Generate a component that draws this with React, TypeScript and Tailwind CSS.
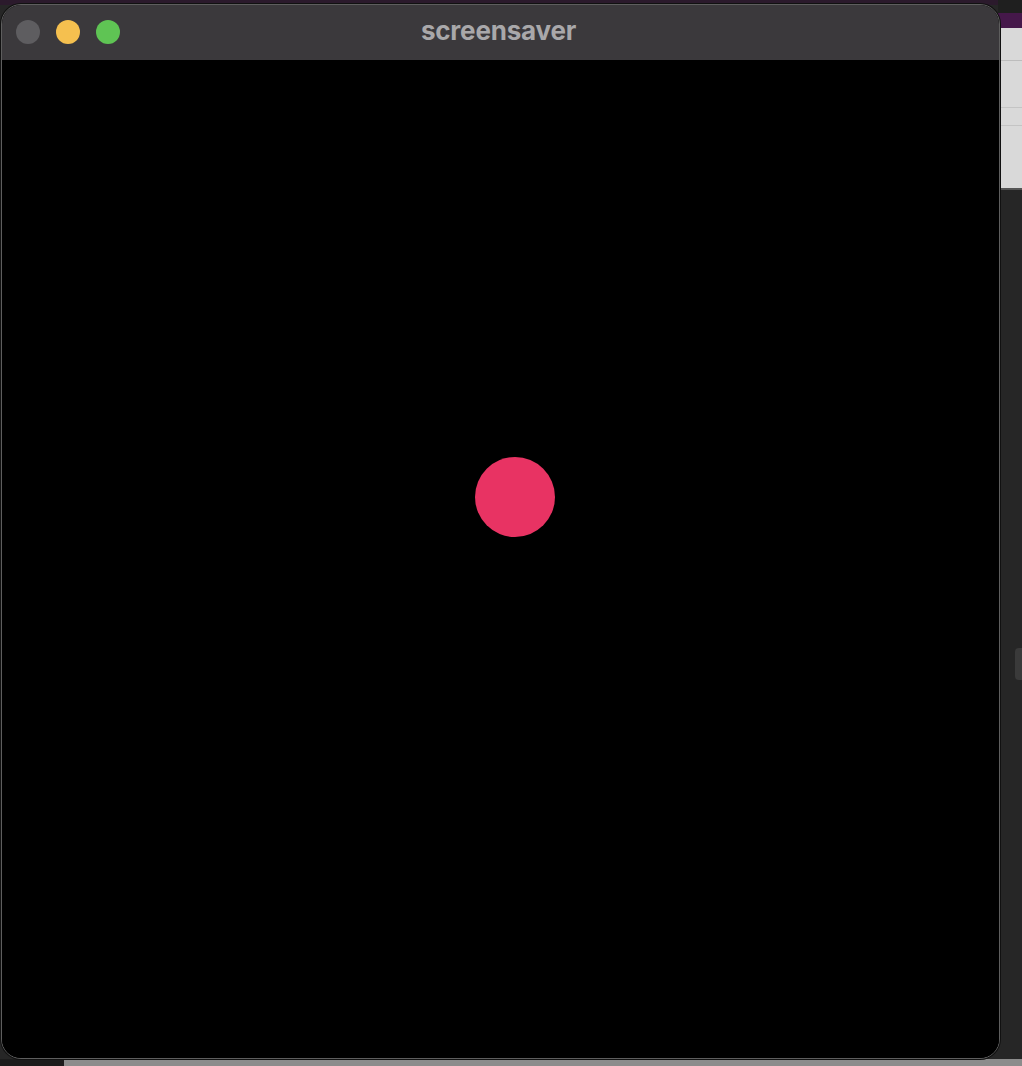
export default function App() {
  return (
    <div className="relative w-[1022px] h-[1066px] overflow-hidden bg-[#262626] font-['Inter','Liberation_Sans',sans-serif]">
      {/* desktop behind: top strip */}
      <div className="absolute left-0 top-0 w-full h-[5px] bg-[#2b1a2c]" />
      {/* other window peeking at the right */}
      <div className="absolute right-0 top-0 w-[24px] h-[1066px] flex flex-col bg-[#262626]">
        <div className="h-[13px] bg-[#1f1f1f]" />
        <div className="h-[15px] bg-[#45184a]" />
        <div className="h-[160px] flex flex-col bg-[#d9d9d9]">
          <div className="h-[32px]" />
          <div className="h-px bg-[#bdbdbd]" />
          <div className="h-[46px]" />
          <div className="h-px bg-[#c4c4c4]" />
          <div className="h-[17px]" />
          <div className="h-px bg-[#c4c4c4]" />
        </div>
        <div className="h-[2px] bg-[#555]" />
        <div className="flex-1 relative">
          <div className="absolute left-[17px] top-[458px] w-[10px] h-[32px] rounded-[4px] bg-[#3a3a3a]" />
        </div>
      </div>
      {/* bottom strip */}
      <div className="absolute left-0 bottom-0 w-full h-[7px] flex">
        <div className="w-[64px] bg-[#1c1c1c]" />
        <div className="flex-1 bg-[#8c8c8c]" />
      </div>

      {/* screensaver window */}
      <div className="absolute left-px top-[4px] w-[999px] h-[1055px] rounded-[20px] border border-[#5e5e5e] bg-black overflow-hidden flex flex-col shadow-[0_0_0_1px_#111]">
        <div className="relative h-[55px] shrink-0 bg-[#3b393c] flex items-center justify-center">
          <div className="absolute left-[14px] top-[15px] flex gap-[16px]">
            <div className="w-[24px] h-[24px] rounded-full bg-[#5e5d60]" />
            <div className="w-[24px] h-[24px] rounded-full bg-[#f5c04f]" />
            <div className="w-[24px] h-[24px] rounded-full bg-[#5fc454]" />
          </div>
          <span className="mr-[4px] mb-[3px] text-[26px] font-bold text-[#a9a8aa] tracking-[-0.2px] leading-none">screensaver</span>
        </div>
        <div className="relative flex-1 bg-black">
          <div className="absolute left-[473px] top-[397px] w-[80px] h-[80px] rounded-full bg-[#e83363]" />
        </div>
      </div>
    </div>
  );
}
